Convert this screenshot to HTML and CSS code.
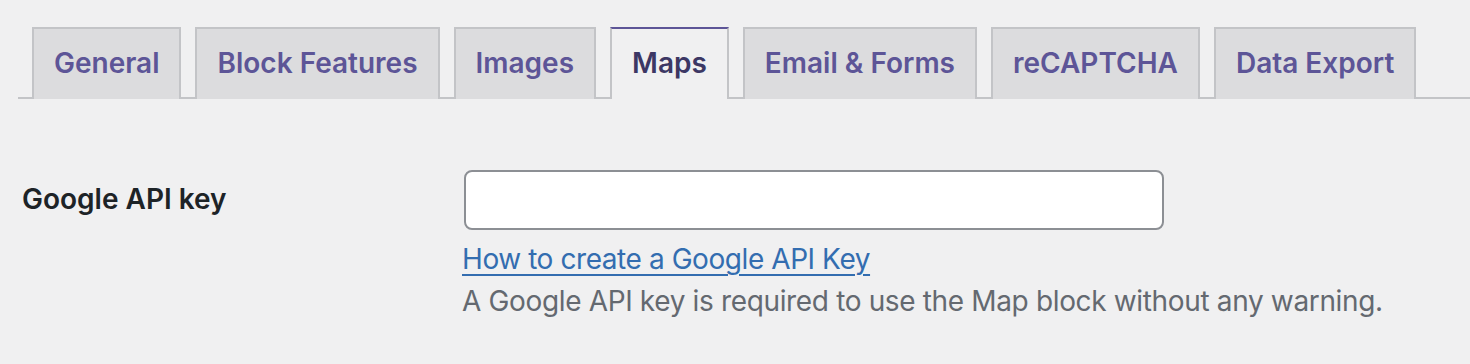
FILE: index.html
```html
<!DOCTYPE html>
<html lang="en">
<head>
    <meta charset="UTF-8">
    <meta name="viewport" content="width=device-width, initial-scale=1.0">
    <title>Settings - Maps</title>
    <link rel="stylesheet" href="styles.css">
</head>
<body>
    <div class="wrap">
        <nav class="nav-tab-wrapper">
            <a href="#" class="nav-tab">General</a>
            <a href="#" class="nav-tab">Block Features</a>
            <a href="#" class="nav-tab">Images</a>
            <a href="#" class="nav-tab nav-tab-active">Maps</a>
            <a href="#" class="nav-tab">Email &amp; Forms</a>
            <a href="#" class="nav-tab">reCAPTCHA</a>
            <a href="#" class="nav-tab">Data Export</a>
        </nav>

        <div class="form-table">
            <div class="form-row">
                <label class="form-label" for="google_api_key">Google API key</label>
                <div class="form-field">
                    <input type="text" id="google_api_key" class="regular-text">
                </div>
            </div>
            <div class="form-row form-row-help">
                <div class="form-label"></div>
                <div class="form-field">
                    <p class="help-link"><a href="#">How to create a Google API Key</a></p>
                    <p class="description">A Google API key is required to use the Map block without any warning.</p>
                </div>
            </div>
        </div>
    </div>
</body>
</html>
```

FILE: styles.css
```css
/* Admin settings page, drawn at 2x */
body {
    margin: 0;
    padding: 0;
    background-color: #f0f0f1;
    color: #1d2327;
    font-family: Inter, 'Noto Sans', sans-serif;
    font-size: 28px;
    line-height: 42px;
}
.wrap {
    padding-top: 27px;
}

/* Tabs */
.nav-tab-wrapper {
    display: flex;
    margin-left: 18px;
    border-bottom: 2px solid #c3c4c7;
}
.nav-tab {
    display: block;
    margin-left: 14px;
    margin-bottom: -2px;
    padding: 10px 20px;
    border: 2px solid #c3c4c7;
    border-bottom: none;
    background-color: #dcdcde;
    color: #5d5597; /* purple scheme */
    font-size: 28px;
    font-weight: 600;
    line-height: 48px;
    text-decoration: none;
}
.nav-tab-active {
    background-color: #f0f0f1;
    border-top-color: #5d5597;
    color: #3c3764;
    padding-bottom: 12px;
}

/* Form */
.form-table {
    padding-left: 22px;
    margin-top: 71px;
}
.form-row {
    display: flex;
    align-items: center;
}
.form-row-help {
    align-items: flex-start;
}
.form-label {
    width: 442px;
    flex-shrink: 0;
    font-weight: 600;
    color: #1d2327;
    margin-top: -3px;
}
.form-row-help .form-label {
    margin-top: 0;
}
.regular-text {
    box-sizing: border-box;
    width: 700px;
    height: 60px;
    margin: 0;
    padding: 0 16px;
    border: 2px solid #8c8f94;
    border-radius: 8px;
    background-color: #fff;
    font-family: inherit;
    font-size: 28px;
}
.help-link {
    margin: 8px 0 0 -2px;
    letter-spacing: -0.43px;
}
.help-link a {
    color: #336db0;
    text-decoration: underline;
    text-decoration-thickness: 2px;
    text-underline-offset: 5px;
}
.description {
    margin: 0 0 0 -2px;
    color: #646970;
    letter-spacing: -0.35px;
}
```
